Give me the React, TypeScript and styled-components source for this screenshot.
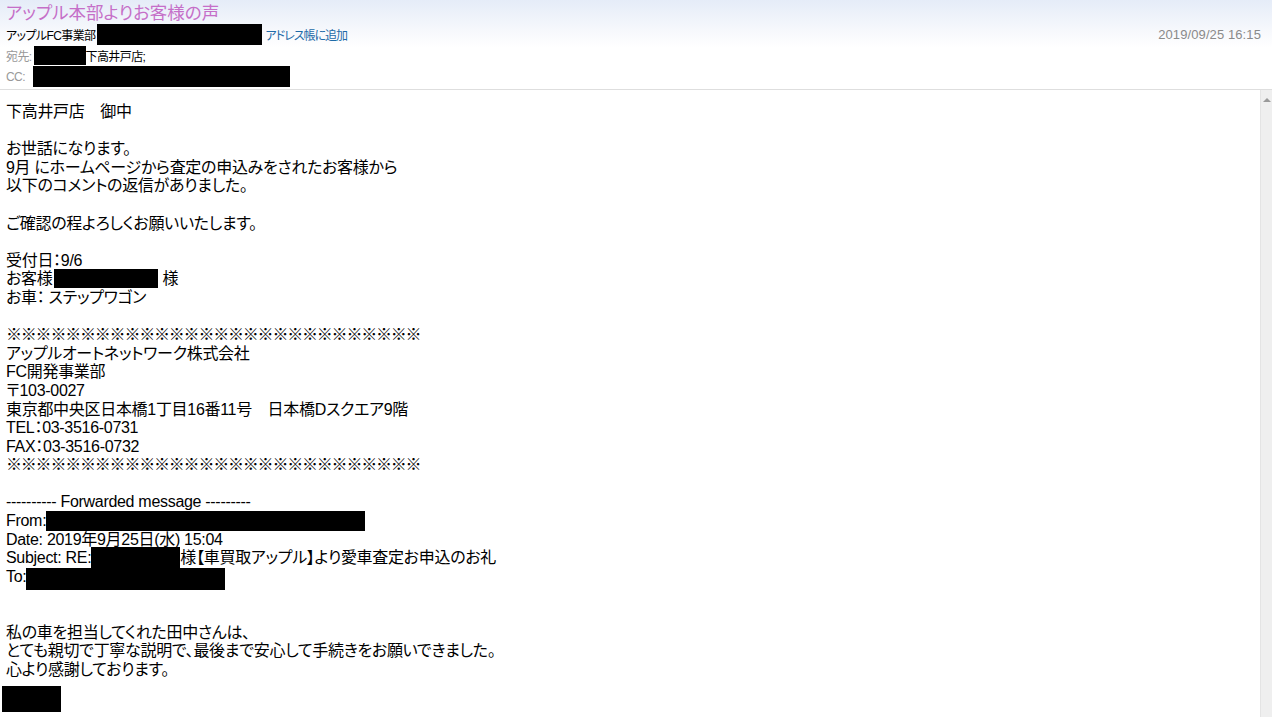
import React from 'react';
import styled, { createGlobalStyle } from 'styled-components';

const GlobalStyle = createGlobalStyle`
  html, body {
    margin: 0;
    padding: 0;
    background: #fff;
    overflow: hidden;
  }
`;

const Page = styled.div`
  display: flex;
  flex-direction: column;
  width: 1272px;
  height: 717px;
  font-family: "Liberation Sans", "Noto Sans CJK JP", sans-serif;
  color: #000;
`;

const Header = styled.header`
  height: 89px;
  padding: 0 11px 0 6px;
  background: linear-gradient(#e5ecf8 0px, #f6f8fc 30px, #fff 48px);
  border-bottom: 1px solid #dedede;
  box-sizing: content-box;
`;

const Subject = styled.div`
  height: 24px;
  font-size: 17.5px;
  line-height: 26px;
  color: #c56fc8;
  font-feature-settings: "palt";
  white-space: nowrap;
`;

const MetaRow = styled.div<{ $h: number }>`
  display: flex;
  align-items: center;
  height: ${(p) => p.$h}px;
  font-size: 12px;
  letter-spacing: -0.6px;
  white-space: nowrap;
  font-feature-settings: "palt";
`;

const MetaLabel = styled.span`
  color: #999;
  margin-right: 2px;
`;

const AddLink = styled.a`
  color: #1d6aa8;
  margin-left: 4px;
  letter-spacing: -1px;
  text-decoration: none;
  cursor: pointer;
`;

const Stamp = styled.span`
  margin-left: auto;
  color: #8a8a8a;
  font-size: 13px;
  letter-spacing: 0.1px;
`;

// black box hiding personal data; margins keep the line box at 18px
const Redact = styled.span<{ $w: number; $h: number; $top?: number }>`
  display: inline-block;
  width: ${(p) => p.$w}px;
  height: ${(p) => p.$h}px;
  background: #000;
  vertical-align: top;
  margin-top: ${(p) => p.$top ?? 0}px;
  margin-bottom: ${(p) => 18 - p.$h - (p.$top ?? 0)}px;
`;

const HeadRedact = styled.span<{ $w: number; $h: number; $ml?: number }>`
  display: inline-block;
  width: ${(p) => p.$w}px;
  height: ${(p) => p.$h}px;
  margin-left: ${(p) => p.$ml ?? 0}px;
  background: #000;
`;

const Main = styled.div`
  flex: 1;
  display: flex;
  min-height: 0;
`;

const Body = styled.div`
  flex: 1;
  overflow: hidden;
  padding: 13px 0 0 6px;
  border-right: 1px solid #e4e4e4;
  font-size: 16px;
  line-height: 18.6px;
  letter-spacing: -0.3px;
  font-feature-settings: "palt";
`;

const Line = styled.div<{ $stars?: boolean }>`
  height: 18.6px;
  white-space: nowrap;
  letter-spacing: ${(p) => (p.$stars ? '-1.2px' : 'inherit')};
`;

const Signature = styled.div`
  width: 59px;
  height: 26px;
  margin: 7px 0 0 -4px;
  background: #000;
`;

const Scrollbar = styled.div`
  width: 11px;
  background: #efefef;
  display: flex;
  justify-content: center;
  padding-top: 8px;
`;

const ArrowUp = styled.span`
  width: 0;
  height: 0;
  border-left: 4px solid transparent;
  border-right: 4px solid transparent;
  border-bottom: 4px solid #9a9a9a;
`;

const STARS = '※※※※※※※※※※※※※※※※※※※※※※※※※※※※';

const bodyLines: React.ReactNode[] = [
  '下高井戸店　御中',
  '',
  'お世話になります。',
  '9月 にホームページから査定の申込みをされたお客様から',
  '以下のコメントの返信がありました。',
  '',
  'ご確認の程よろしくお願いいたします。',
  '',
  '受付日：9/6',
  <>お客様<Redact $w={104} $h={19} $top={-1} style={{ marginLeft: 2 }} /> 様</>,
  'お車： ステップワゴン',
  '',
  STARS,
  'アップルオートネットワーク株式会社',
  'FC開発事業部',
  '〒103-0027',
  '東京都中央区日本橋1丁目16番11号　日本橋Dスクエア9階',
  'TEL：03-3516-0731',
  'FAX：03-3516-0732',
  STARS,
  '',
  '---------- Forwarded message ---------',
  <>From:<Redact $w={319} $h={20} $top={-1} /></>,
  'Date: 2019年9月25日(水) 15:04',
  <>Subject: RE:<Redact $w={89} $h={22} $top={-2} />様【車買取アップル】より愛車査定お申込のお礼</>,
  <>To:<Redact $w={199} $h={22} $top={0} /></>,
  '',
  '',
  '私の車を担当してくれた田中さんは、',
  'とても親切で丁寧な説明で、最後まで安心して手続きをお願いできました。',
  '心より感謝しております。',
];

export default function App() {
  return (
    <>
      <GlobalStyle />
      <Page>
        <Header>
          <Subject>アップル本部よりお客様の声</Subject>
          <MetaRow $h={21}>
            アップルFC事業部<HeadRedact $w={165} $h={21} $ml={1} />
            <AddLink>アドレス帳に追加</AddLink>
            <Stamp>2019/09/25 16:15</Stamp>
          </MetaRow>
          <MetaRow $h={20}>
            <MetaLabel>宛先:</MetaLabel>
            <HeadRedact $w={52} $h={19} />
            下高井戸店;
          </MetaRow>
          <MetaRow $h={23}>
            <MetaLabel>CC:</MetaLabel>
            <HeadRedact $w={257} $h={21} $ml={6} />
          </MetaRow>
        </Header>
        <Main>
          <Body>
            {bodyLines.map((l, i) => (
              <Line key={i} $stars={l === STARS}>{l}</Line>
            ))}
            <Signature />
          </Body>
          <Scrollbar>
            <ArrowUp />
          </Scrollbar>
        </Main>
      </Page>
    </>
  );
}
